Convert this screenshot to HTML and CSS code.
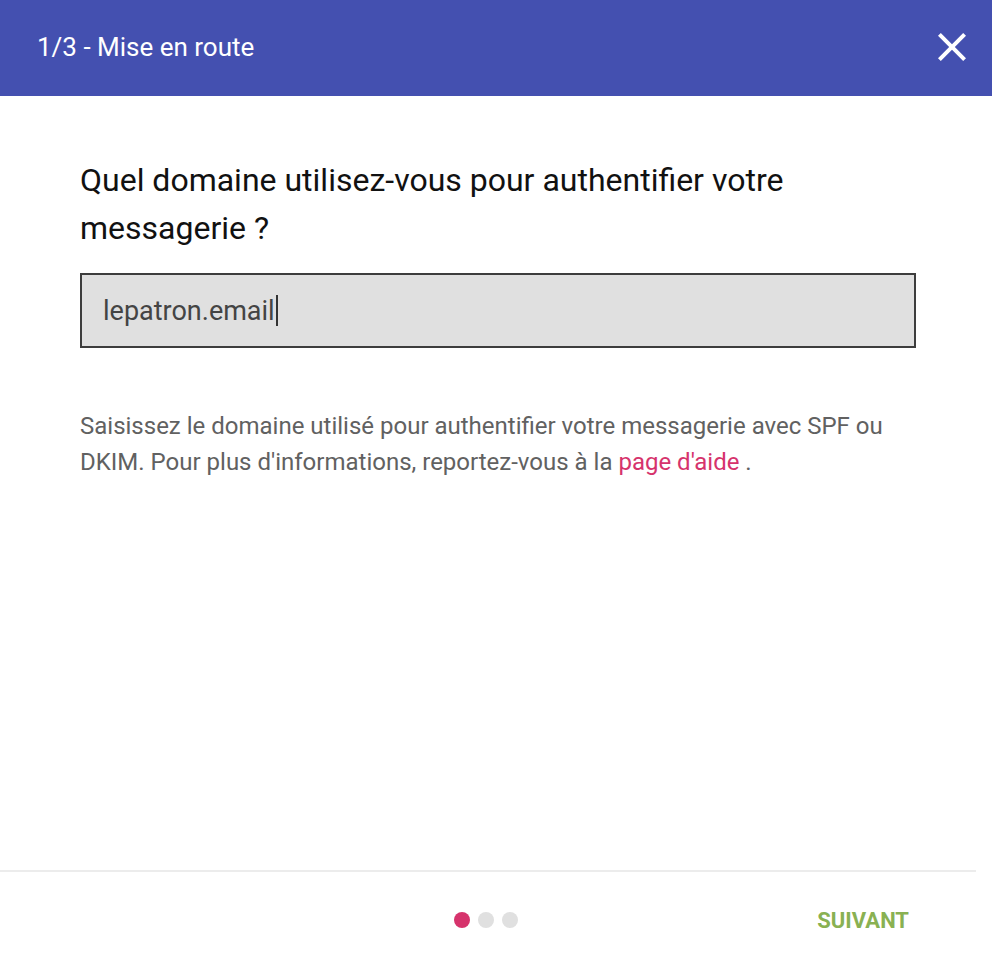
FILE: index.html
```html
<!DOCTYPE html>
<html lang="fr">
<head>
<meta charset="utf-8">
<title>Mise en route</title>
<link rel="stylesheet" href="styles.css">
</head>
<body>
<div class="dialog">
  <header class="topbar">
    <h1 class="title">1/3 - Mise en route</h1>
    <button class="close" aria-label="Fermer">
      <svg viewBox="0 0 24 24" width="48" height="48"><path fill="#fff" d="M19 6.41L17.59 5 12 10.59 6.41 5 5 6.41 10.59 12 5 17.59 6.41 19 12 13.41 17.59 19 19 17.59 13.41 12z"/></svg>
    </button>
  </header>
  <main class="content">
    <h2 class="question">Quel domaine utilisez-vous pour authentifier votre messagerie ?</h2>
    <div class="field"><span class="value">lepatron.email</span><span class="caret"></span></div>
    <p class="help">Saisissez le domaine utilisé pour authentifier votre messagerie avec SPF ou DKIM. Pour plus d'informations, reportez-vous à la <a href="#" class="link">page d'aide</a>&nbsp;.</p>
  </main>
  <footer class="footer">
    <div class="spacer"></div>
    <div class="dots">
      <span class="dot active"></span>
      <span class="dot"></span>
      <span class="dot"></span>
    </div>
    <div class="actions"><button class="next">SUIVANT</button></div>
  </footer>
</div>
</body>
</html>
```
FILE: styles.css
```css
html, body {
  margin: 0;
  padding: 0;
  background: #fff;
}
body {
  font-family: Roboto, "Liberation Sans", Arial, sans-serif;
  width: 992px;
  height: 968px;
  overflow: hidden;
}
.dialog {
  display: flex;
  flex-direction: column;
  height: 968px;
}
.topbar {
  height: 96px;
  background: #4450b0;
  display: flex;
  align-items: center;
  justify-content: space-between;
  padding: 0 16px 0 37px;
  box-sizing: border-box;
  flex: none;
}
.title {
  margin: 0 0 2px;
  color: #fff;
  font-size: 26px;
  font-weight: 400;
}
.close {
  width: 48px;
  height: 48px;
  padding: 0;
  border: 0;
  background: none;
  display: flex;
  margin-top: -2px;
}
.content {
  flex: 1;
  padding: 60px 76px 0 80px;
}
.question {
  margin: 0;
  font-size: 32px;
  line-height: 48px;
  font-weight: 400;
  color: #111;
}
.field {
  margin-top: 21px;
  height: 75px;
  box-sizing: border-box;
  border: 2px solid #3d3d3d;
  background: #e0e0e0;
  display: flex;
  align-items: center;
  padding-left: 21px;
  font-size: 27px;
  color: #444;
}
.caret {
  display: inline-block;
  width: 2px;
  height: 31px;
  background: #333;
  margin-left: 1px;
}
.help {
  margin: 60px 0 0;
  font-size: 24px;
  line-height: 36px;
  color: #616161;
}
.link {
  color: #d6336c;
  text-decoration: none;
}
.footer {
  width: 976px;
  height: 98px;
  border-top: 2px solid #ececec;
  display: grid;
  grid-template-columns: 1fr auto 1fr;
  align-items: center;
  box-sizing: border-box;
  flex: none;
}
.dots {
  display: flex;
  gap: 8px;
  margin-right: 4px;
}
.dot {
  width: 16px;
  height: 16px;
  border-radius: 50%;
  background: #e0e0e0;
}
.dot.active {
  background: #d6336c;
}
.actions {
  display: flex;
  justify-content: flex-end;
  padding-right: 51px;
}
.next {
  border: 0;
  background: none;
  font-family: inherit;
  font-size: 22px;
  font-weight: 700;
  color: #89b152;
  padding: 8px 16px;
}
```
